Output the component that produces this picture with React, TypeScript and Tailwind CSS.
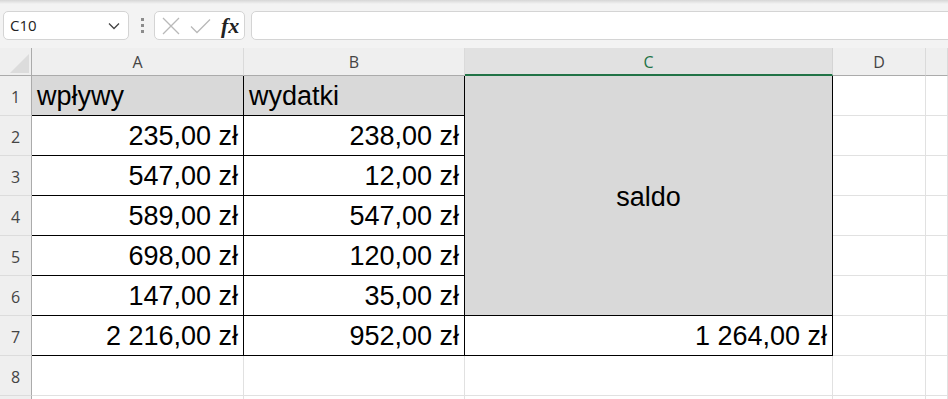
import { ReactNode } from 'react';

type Cell = {
  text?: string;
  align?: 'left' | 'right' | 'center';
  fill?: boolean;
  boxed?: boolean;
  span?: boolean;
};

const cols = ['A', 'B', 'C', 'D', ''];

const rows: Cell[][] = [
  [
    { text: 'wpływy', align: 'left', fill: true, boxed: true },
    { text: 'wydatki', align: 'left', fill: true, boxed: true },
    { text: 'saldo', align: 'center', fill: true, boxed: true, span: true },
    {},
    {},
  ],
  ...[
    ['235,00 zł', '238,00 zł'],
    ['547,00 zł', '12,00 zł'],
    ['589,00 zł', '547,00 zł'],
    ['698,00 zł', '120,00 zł'],
    ['147,00 zł', '35,00 zł'],
  ].map(([a, b]) => [
    { text: a, align: 'right', boxed: true } as Cell,
    { text: b, align: 'right', boxed: true } as Cell,
    {},
    {},
  ]),
  [
    { text: '2 216,00 zł', align: 'right', boxed: true },
    { text: '952,00 zł', align: 'right', boxed: true },
    { text: '1 264,00 zł', align: 'right', boxed: true },
    {},
    {},
  ],
  [{}, {}, {}, {}, {}],
  [{}, {}, {}, {}, {}],
];

function Box({ className, children }: { className: string; children?: ReactNode }) {
  return (
    <div className={`h-[29px] rounded-[5px] border border-[#d4d4d4] bg-white ${className}`}>
      {children}
    </div>
  );
}

function FormulaBar() {
  return (
    <div className="h-[48px] bg-[#f3f3f3]">
      <div className="h-[4px] bg-gradient-to-b from-[#d6d6d6] to-[#f3f3f3]" />
      <div className="mt-[7px] flex items-center">
        <Box className="ml-[3px] flex w-[126px] items-center justify-between pl-[6px] pr-[8px]">
          <span className="text-[15px] text-[#222] font-['Open_Sans',sans-serif]">C10</span>
          <svg width="12" height="8" viewBox="0 0 12 8" fill="none">
            <path d="M1 1.5 6 6.5 11 1.5" stroke="#444" strokeWidth="1.3" />
          </svg>
        </Box>
        <div className="ml-[12px] flex w-[3px] flex-col gap-[3px]">
          <span className="h-[3px] w-[3px] bg-[#8c8c8c]" />
          <span className="h-[3px] w-[3px] bg-[#8c8c8c]" />
          <span className="h-[3px] w-[3px] bg-[#8c8c8c]" />
        </div>
        <Box className="ml-[10px] flex w-[91px] items-center pl-[7px]">
          <svg width="18" height="18" viewBox="0 0 18 18" fill="none">
            <path d="M1 1 17 17M17 1 1 17" stroke="#b9b9b9" strokeWidth="1.3" />
          </svg>
          <svg className="ml-[10px]" width="21" height="16" viewBox="0 0 21 16" fill="none">
            <path d="M1 8.5 7 14.5 20 1.5" stroke="#b9b9b9" strokeWidth="1.3" />
          </svg>
          <span className="ml-[10px] text-[22px] font-semibold italic leading-none text-[#222] font-['Liberation_Serif',serif]">
            fx
          </span>
        </Box>
        <Box className="ml-[6px] mr-[-12px] flex-1" />
      </div>
    </div>
  );
}

export default function App() {
  return (
    <div className="h-[399px] w-[948px] overflow-hidden bg-white">
      <FormulaBar />
      <div className="grid grid-cols-[32px_212px_221px_368px_93px_1fr] grid-rows-[28px_repeat(9,40px)] font-['Open_Sans',sans-serif]">
        {/* corner + column headers */}
        <div className="relative border-b border-r border-[#ababab] bg-[#efefef]">
          <svg className="absolute left-[10px] top-[6px]" width="20" height="20" viewBox="0 0 20 20">
            <path d="M19 0 19 19 0 19Z" fill="#dcdcdc" />
          </svg>
        </div>
        {cols.map((c) =>
          c === 'C' ? (
            <div
              key={c}
              className="flex items-center justify-center border-b-2 border-r border-b-[#217346] border-r-[#d4d4d4] bg-[#e1e1e1] pt-[2px] text-[16px] text-[#217346]"
            >
              {c}
            </div>
          ) : (
            <div
              key={c || 'E'}
              className="flex items-center justify-center border-b border-r border-b-[#ababab] border-r-[#dadada] bg-[#efefef] pt-[1px] text-[16px] text-[#444]"
            >
              {c}
            </div>
          )
        )}

        {rows.map((row, r) => [
          <div
            key={`h${r}`}
            className="flex items-end justify-center border-b border-r border-b-[#dcdcdc] border-r-[#ababab] bg-[#efefef] pb-[8px] text-[16px] leading-[20px] text-[#444]"
          >
            {r < 8 ? r + 1 : ''}
          </div>,
          ...row.map((cell, c) => (
            <div
              key={`${r}-${c}`}
              className={`flex border-b border-r px-[5px] text-[27px] leading-[27px] text-black font-['Liberation_Sans',Arial,sans-serif] ${
                cell.span ? 'row-span-6 items-center justify-center pt-[3px]' : 'items-end pb-[5px]'
              } ${cell.align === 'right' ? 'justify-end' : ''} ${cell.fill ? 'bg-[#d9d9d9]' : 'bg-white'} ${
                cell.boxed ? 'border-black' : 'border-[#e1e1e1]'
              }`}
            >
              {cell.text}
            </div>
          )),
        ])}
      </div>
    </div>
  );
}
